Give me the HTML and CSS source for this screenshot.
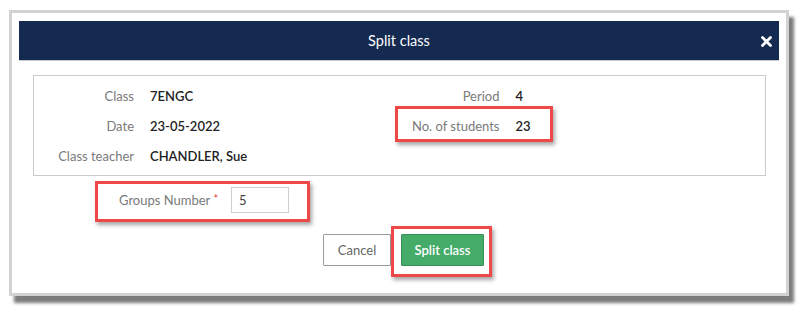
FILE: index.html
```html
<!DOCTYPE html>
<html>
<head>
<meta charset="utf-8">
<link rel="stylesheet" href="styles.css">
</head>
<body>
<div class="modal">
  <div class="modal-header">
    <span class="title">Split class</span>
    <svg class="close" width="11" height="11" viewBox="0 0 11 11"><path d="M1.5 1.5 L9.5 9.5 M9.5 1.5 L1.5 9.5" stroke="#fff" stroke-width="2.8" stroke-linecap="round"/></svg>
  </div>
  <div class="modal-body">
    <div class="info">
      <div class="col">
        <div class="row"><span class="lbl">Class</span><span class="val">7ENGC</span></div>
        <div class="row"><span class="lbl">Date</span><span class="val">23-05-2022</span></div>
        <div class="row"><span class="lbl">Class teacher</span><span class="val">CHANDLER, Sue</span></div>
      </div>
      <div class="col">
        <div class="row"><span class="lbl">Period</span><span class="val">4</span></div>
        <div class="row"><span class="lbl">No. of students</span><span class="val">23</span></div>
      </div>
    </div>
    <div class="groups">
      <span class="glbl">Groups Number <span class="req">*</span></span>
      <div class="input">5</div>
    </div>
    <div class="actions">
      <button class="btn cancel">Cancel</button>
      <button class="btn split">Split class</button>
    </div>
  </div>
</div>
<div class="hl hl-students"></div>
<div class="hl hl-groups"></div>
<div class="hl hl-split"></div>
</body>
</html>
```
FILE: styles.css
```css
* { box-sizing: border-box; }
body {
  margin: 0;
  background: #fff;
  font-family: Lato, "Liberation Sans", sans-serif;
  width: 800px;
  height: 315px;
  overflow: hidden;
  position: relative;
}
.modal {
  margin: 10px 0 0 9px;
  width: 780px;
  height: 286px;
  border: 3px solid #d2d2d2;
  background: #fff;
  padding: 8px 7px 0 7px;
  box-shadow: 5px 7px 3px #7c7c7c;
}
.modal-header {
  height: 40px;
  background: #142a50;
  border-bottom: 1px solid #c9c9c9;
  display: flex;
  align-items: center;
  justify-content: center;
  position: relative;
}
.title {
  color: #fff;
  font-size: 14.5px;
}
.close {
  position: absolute;
  right: 7px;
  top: 15px;
}
.modal-body {
  padding: 14px 13px 0 14px;
}
.info {
  border: 1px solid #cfc9c9;
  height: 101px;
  padding: 5px 0;
  display: flex;
}
.col { width: 50%; }
.row {
  height: 30px;
  display: flex;
  align-items: center;
  font-size: 13px;
}
.lbl {
  width: 100px;
  text-align: right;
  color: #7a7a7a;
}
.val {
  margin-left: 16px;
  color: #222;
  font-weight: 600;
}
.groups {
  display: flex;
  align-items: center;
  margin-top: 10px;
  height: 28px;
  padding-left: 86px;
  font-size: 13px;
}
.glbl { color: #7a7a7a; }
.req { color: #e53935; font-size: 11px; vertical-align: top; }
.input {
  margin-left: 13px;
  width: 58px;
  height: 26px;
  border: 1px solid #cfcfcf;
  padding: 5px 7px;
  color: #444;
  font-size: 13px;
  line-height: 15px;
}
.actions {
  display: flex;
  justify-content: center;
  gap: 10px;
  margin-top: 20px;
  padding-left: 8px;
}
.btn {
  font-family: Lato, "Liberation Sans", sans-serif;
  font-size: 13px;
  height: 32px;
  border-radius: 1px;
}
.cancel {
  width: 68px;
  background: #fff;
  border: 1px solid #9a9a9a;
  color: #666;
}
.split {
  width: 83px;
  background: #45ab69;
  border: 1px solid #35915a;
  color: #fff;
  font-weight: 600;
}
.hl {
  position: absolute;
  border: 3px solid #ee4848;
  box-shadow: 2px 3px 4px rgba(0,0,0,0.35);
}
.hl-students { left: 395px; top: 106px; width: 158px; height: 36px; }
.hl-groups { left: 95px; top: 181px; width: 215px; height: 41px; }
.hl-split { left: 391px; top: 226px; width: 101px; height: 51px; }
```
